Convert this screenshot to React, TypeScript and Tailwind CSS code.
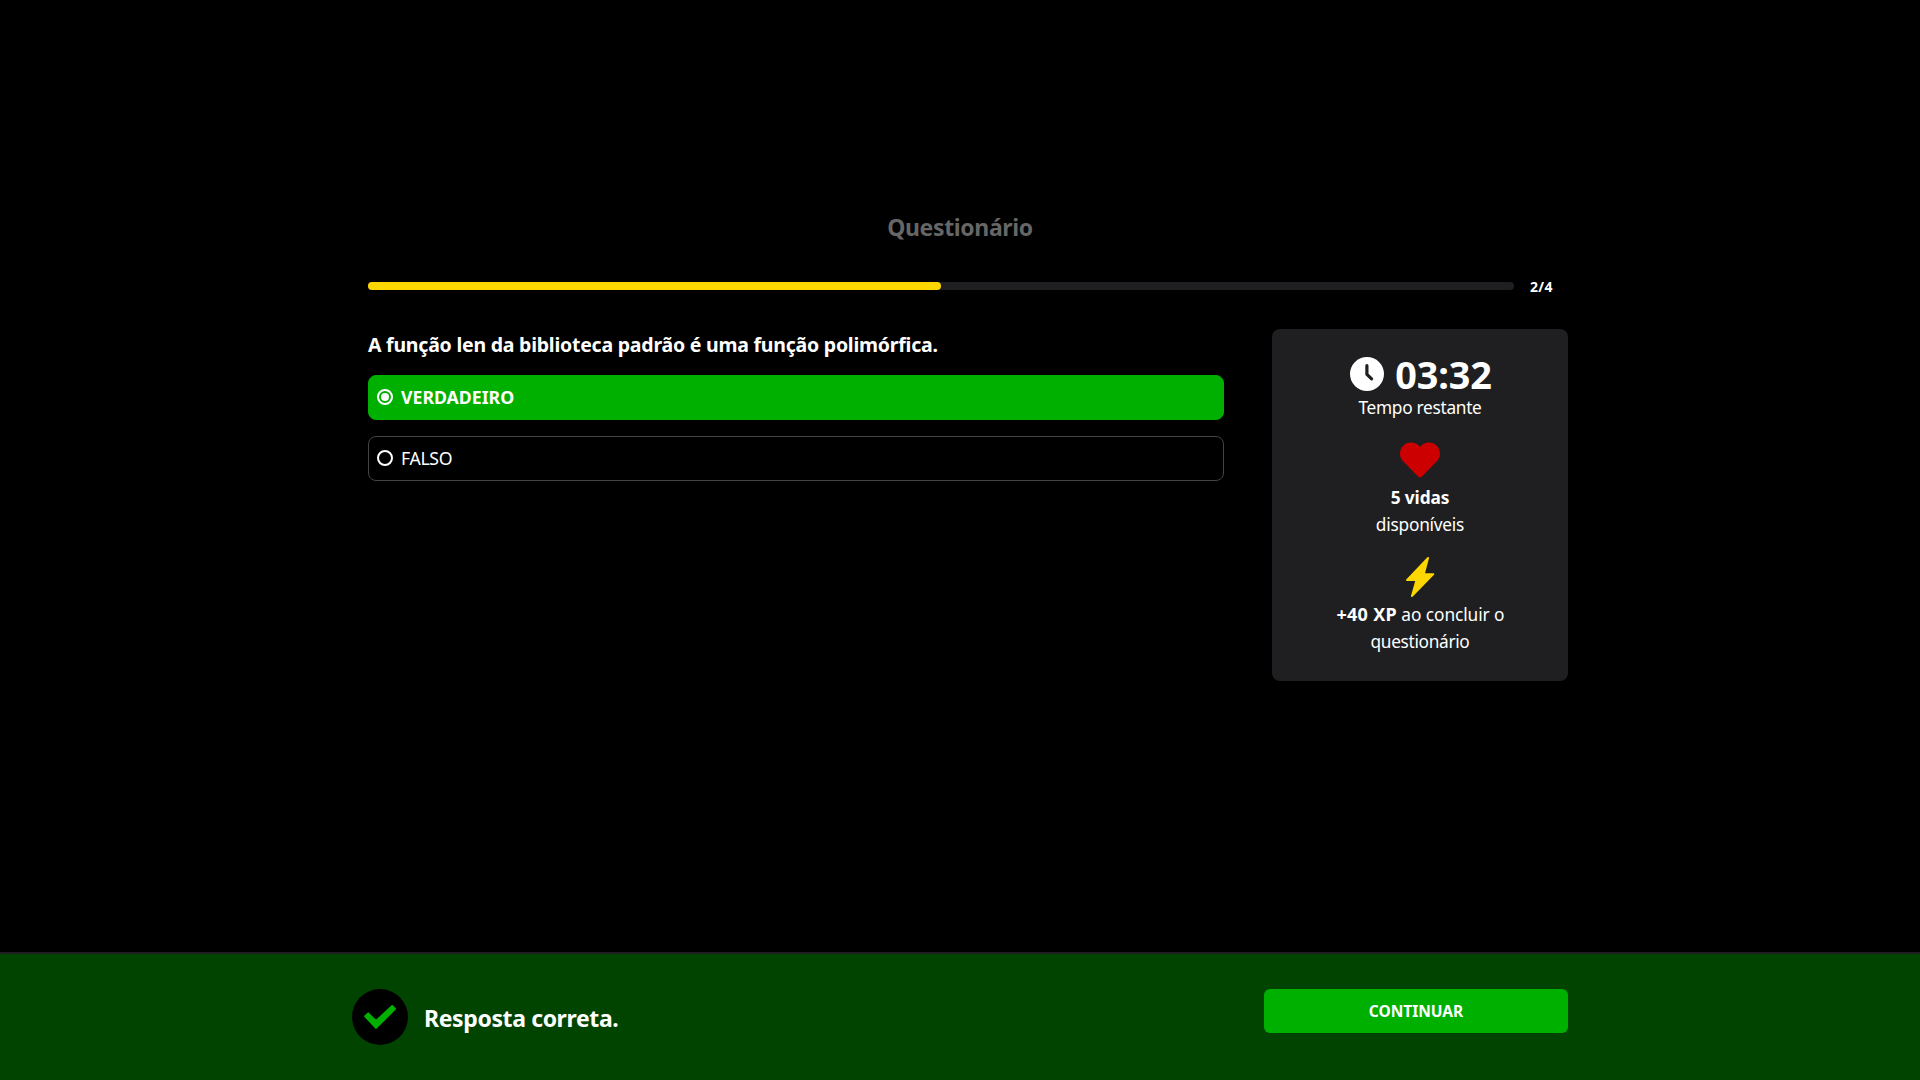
function ClockIcon() {
  return (
    <svg width="34" height="34" viewBox="0 0 34 34" fill="none">
      <circle cx="17" cy="17" r="17" fill="#fff" />
      <path d="M16.9 8.5v8.8l4.7 4.5" stroke="#1f1f21" strokeWidth="3.2" strokeLinecap="round" strokeLinejoin="round" />
    </svg>
  );
}

function HeartIcon() {
  return (
    <svg width="40" height="40" viewBox="0 0 40 40" className="mt-[19px] mb-1" fill="#cc0000">
      <path d="M20 7C17.9 4.2 14.8 2.5 11.3 2.5C5 2.5 0 7.4 0 13.5C0 17 1.4 19.6 3.4 21.6L18.3 36.8Q20 38.4 21.7 36.8L36.6 21.6C38.6 19.6 40 17 40 13.5C40 7.4 35 2.5 28.7 2.5C25.2 2.5 22.1 4.2 20 7Z" />
    </svg>
  );
}

function BoltIcon() {
  return (
    <svg width="40" height="40" viewBox="0 0 40 40" className="mt-[19px] mb-1" fill="#ffd700">
      <path d="M27.4.3C28.1-.3 29.2.2 29 1.2L25 16.2H33.3C34.2 16.2 34.6 17.2 34 17.8L12.8 39.6C12 40.4 10.8 39.8 11 38.8L15.2 24H6.9C6 24 5.7 23 6.2 22.4Z" />
    </svg>
  );
}

function CheckIcon() {
  return (
    <svg width="32" height="24" viewBox="0 0 32 24" fill="#00b000" stroke="#00b000" strokeWidth="2" strokeLinejoin="round">
      <path d="M1.2 11.2L4.2 8.4L12 16.1L28.2 1L31 3.9L12 22.9Z" />
    </svg>
  );
}

function Radio({ checked }: { checked?: boolean }) {
  return (
    <span className="-mt-px flex size-4 shrink-0 items-center justify-center rounded-full border-2 border-white">
      {checked && <span className="size-2 rounded-full bg-white" />}
    </span>
  );
}

export default function App() {
  return (
    <div className="flex h-screen flex-col overflow-hidden bg-black font-['Noto_Sans',sans-serif] text-white">
      <main className="mx-auto flex w-[1216px] grow flex-col pt-[211px]">
        <h1 className="text-center text-[23px] leading-8 font-bold tracking-[-0.36px] text-[#666]">Questionário</h1>
        <div className="mt-8 flex h-[22px] items-center pl-4">
          <div className="h-2 w-[1146px] rounded-[4px] bg-[#1f1f21]">
            <div className="h-2 w-1/2 rounded-[4px] bg-[#ffd700]" />
          </div>
          <span className="mt-px ml-4 text-[14px] leading-5 font-bold tracking-[0.3px]">2/4</span>
        </div>
        <div className="mt-8 flex items-start gap-12 pl-4">
          <section className="w-[856px] shrink-0">
            <h2 className="pt-px text-[19.5px] leading-[30px] font-bold tracking-[-0.23px]">
              A função len da biblioteca padrão é uma função polimórfica.
            </h2>
            <div className="mt-[15px] flex flex-col gap-4">
              <button className="flex h-[45px] items-center gap-2 rounded-lg border border-[#00b000] bg-[#00b000] px-2 text-[17.7px] leading-[27px] font-bold">
                <Radio checked />
                VERDADEIRO
              </button>
              <button className="flex h-[45px] items-center gap-2 rounded-lg border border-[#444] px-2 text-[17.7px] leading-[27px] tracking-[-0.35px]">
                <Radio />
                FALSO
              </button>
            </div>
          </section>
          <aside className="flex h-[352px] w-[296px] shrink-0 flex-col items-center rounded-lg bg-[#1f1f21] pt-[25px] text-center text-[17.3px] leading-[27px]">
            <div className="ml-0.5 flex h-10 items-center gap-[11px] text-[37.8px] leading-10 font-bold tracking-[-0.15px]">
              <ClockIcon />
              <span className="pt-px">03:32</span>
            </div>
            <p className="tracking-[-0.3px]">Tempo restante</p>
            <HeartIcon />
            <p className="font-bold tracking-[-0.1px]">5 vidas</p>
            <p className="tracking-[-0.23px]">disponíveis</p>
            <BoltIcon />
            <p className="ml-px tracking-[-0.07px]">
              <strong className="text-[18px] tracking-[0.27px]">+40 XP</strong> ao concluir o
            </p>
            <p className="tracking-[-0.34px]">questionário</p>
          </aside>
        </div>
      </main>
      <footer className="h-32 border-t-2 border-[#1f1f21] bg-[#004400]">
        <div className="mx-auto flex w-[1216px] items-start pt-[35px]">
          <div className="flex size-14 items-center justify-center rounded-full bg-black">
            <CheckIcon />
          </div>
          <p className="mt-[13px] ml-4 text-[23px] leading-8 font-bold tracking-[-0.38px]">Resposta correta.</p>
          <button className="ml-auto h-11 w-[304px] rounded-md bg-[#00b000] text-[15.5px] leading-6 font-bold tracking-[-0.03px]">
            CONTINUAR
          </button>
        </div>
      </footer>
    </div>
  );
}
